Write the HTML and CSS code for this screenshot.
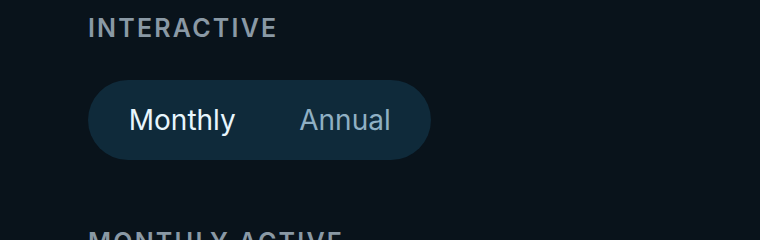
FILE: index.html
```html
<!DOCTYPE html>
<html lang="en">
<head>
    <meta charset="UTF-8">
    <title>Billing toggle</title>
    <link rel="stylesheet" href="styles.css">
</head>
<body>
    <div class="panel">
        <div class="section">
            <div class="section-label">Interactive</div>
            <div class="toggle">
                <button class="toggle-btn active">Monthly</button>
                <button class="toggle-btn">Annual</button>
            </div>
        </div>
        <div class="section">
            <div class="section-label">Monthly active</div>
        </div>
    </div>
</body>
</html>
```

FILE: styles.css
```css
* {
    box-sizing: border-box;
}

/* Body */
body {
    margin: 0;
    padding: 0;
    background-color: #09131b;
    font-family: 'Inter', 'Noto Sans', sans-serif;
}

/* Panel */
.panel {
    padding: 10px 88px;
}

.section {
    margin-bottom: 64px;
}

/* Section Label */
.section-label {
    font-size: 25px;
    font-weight: 600;
    letter-spacing: 2.2px;
    text-transform: uppercase;
    color: #8a99a5;
    line-height: 36px;
    margin-bottom: 34px;
}

/* Toggle */
.toggle {
    display: inline-flex;
    padding: 8px 9px;
    height: 80px;
    border-radius: 40px;
    background-color: #0f2a3a;
}

.toggle-btn {
    padding: 0 31.75px;
    border: none;
    background: transparent;
    font-family: inherit;
    font-size: 28px;
    color: #8fb0c4;
    cursor: pointer;
}

.toggle-btn.active {
    color: #e8f6fd;
}
```
